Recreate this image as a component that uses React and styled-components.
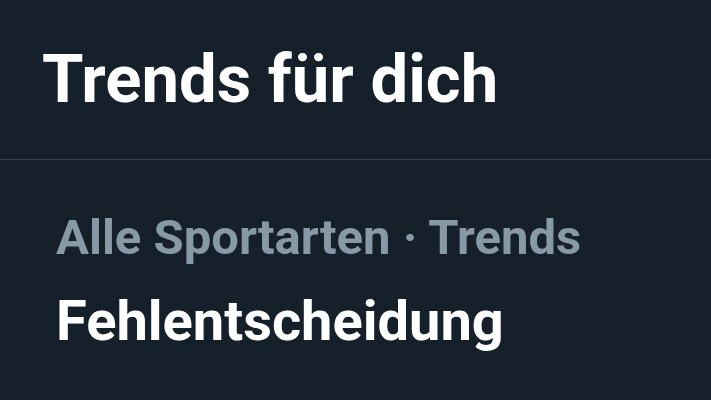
import React from "react";
import styled, { createGlobalStyle } from "styled-components";

const GlobalStyle = createGlobalStyle`
  html, body {
    margin: 0;
    padding: 0;
    background: #15202b;
  }
  body {
    font-family: Roboto, "Liberation Sans", sans-serif;
  }
`;

function App() {
  return (
    <>
      <GlobalStyle />
      <Panel>
        <Header>
          <Title>Trends für dich</Title>
        </Header>
        <TrendItem>
          <TrendMeta>Alle Sportarten · Trends</TrendMeta>
          <TrendName>Fehlentscheidung</TrendName>
        </TrendItem>
      </Panel>
    </>
  );
}

const Panel = styled.section`
  width: 711px;
  height: 400px;
  overflow: hidden;
  background: #15202b;
  display: flex;
  flex-direction: column;
`;

const Header = styled.header`
  height: 160px;
  box-sizing: border-box;
  padding: 46px 0 0 42px;
  border-bottom: 1px solid #38444d;
`;

const Title = styled.h2`
  margin: 0;
  color: #ffffff;
  font-size: 67px;
  font-weight: 700;
  line-height: 1;
`;

const TrendItem = styled.div`
  padding: 53px 0 0 56px;
  display: flex;
  flex-direction: column;
  gap: 31px;
`;

const TrendMeta = styled.div`
  color: #8899a6;
  font-size: 49px;
  font-weight: 700;
  line-height: 1;
`;

const TrendName = styled.div`
  color: #ffffff;
  font-size: 56px;
  font-weight: 700;
  line-height: 1;
`;

export default App;
